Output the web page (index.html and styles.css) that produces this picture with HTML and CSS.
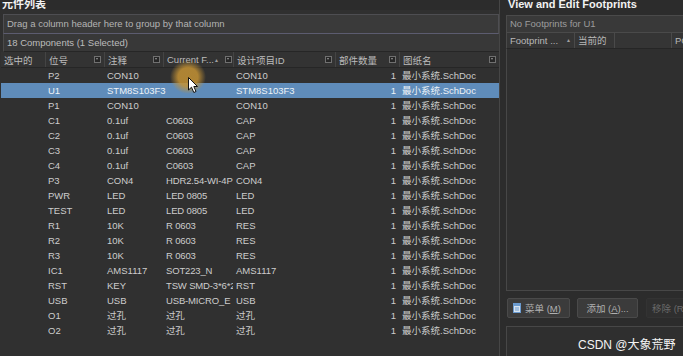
FILE: index.html
```html
<!DOCTYPE html>
<html>
<head>
    <meta charset="utf-8">
    <title>元件列表</title>
    <link rel="stylesheet" href="styles.css">
</head>
<body>

<div class="app">

    <!-- component list -->
    <section class="left">
        <div class="panel-title"><span>元件列表</span></div>
        <div class="group-box">Drag a column header here to group by that column</div>
        <div class="count-row">18 Components (1 Selected)</div>

        <table class="grid">
            <colgroup>
                <col style="width:44px">
                <col style="width:59px">
                <col style="width:59px">
                <col style="width:70px">
                <col style="width:102px">
                <col style="width:64px">
                <col style="width:100px">
            </colgroup>
            <thead>
                <tr>
                    <th><div class="hd"><span>选中的</span></div></th>
                    <th><div class="hd"><span>位号</span><i class="filter"></i></div></th>
                    <th><div class="hd"><span>注释</span><i class="filter"></i></div></th>
                    <th><div class="hd"><span>Current F...</span><b class="sort">&#9650;</b><i class="filter"></i></div></th>
                    <th><div class="hd"><span>设计项目ID</span><i class="filter"></i></div></th>
                    <th><div class="hd"><span>部件数量</span><i class="filter"></i></div></th>
                    <th><div class="hd"><span>图纸名</span><i class="filter"></i></div></th>
                </tr>
            </thead>
            <tbody>
                <tr><td></td><td>P2</td><td>CON10</td><td></td><td>CON10</td><td class="num">1</td><td>最小系统.SchDoc</td></tr>
                <tr class="selected"><td></td><td>U1</td><td>STM8S103F3</td><td></td><td>STM8S103F3</td><td class="num">1</td><td>最小系统.SchDoc</td></tr>
                <tr><td></td><td>P1</td><td>CON10</td><td></td><td>CON10</td><td class="num">1</td><td>最小系统.SchDoc</td></tr>
                <tr><td></td><td>C1</td><td>0.1uf</td><td>C0603</td><td>CAP</td><td class="num">1</td><td>最小系统.SchDoc</td></tr>
                <tr><td></td><td>C2</td><td>0.1uf</td><td>C0603</td><td>CAP</td><td class="num">1</td><td>最小系统.SchDoc</td></tr>
                <tr><td></td><td>C3</td><td>0.1uf</td><td>C0603</td><td>CAP</td><td class="num">1</td><td>最小系统.SchDoc</td></tr>
                <tr><td></td><td>C4</td><td>0.1uf</td><td>C0603</td><td>CAP</td><td class="num">1</td><td>最小系统.SchDoc</td></tr>
                <tr><td></td><td>P3</td><td>CON4</td><td>HDR2.54-WI-4P</td><td>CON4</td><td class="num">1</td><td>最小系统.SchDoc</td></tr>
                <tr><td></td><td>PWR</td><td>LED</td><td>LED 0805</td><td>LED</td><td class="num">1</td><td>最小系统.SchDoc</td></tr>
                <tr><td></td><td>TEST</td><td>LED</td><td>LED 0805</td><td>LED</td><td class="num">1</td><td>最小系统.SchDoc</td></tr>
                <tr><td></td><td>R1</td><td>10K</td><td>R 0603</td><td>RES</td><td class="num">1</td><td>最小系统.SchDoc</td></tr>
                <tr><td></td><td>R2</td><td>10K</td><td>R 0603</td><td>RES</td><td class="num">1</td><td>最小系统.SchDoc</td></tr>
                <tr><td></td><td>R3</td><td>10K</td><td>R 0603</td><td>RES</td><td class="num">1</td><td>最小系统.SchDoc</td></tr>
                <tr><td></td><td>IC1</td><td>AMS1117</td><td>SOT223_N</td><td>AMS1117</td><td class="num">1</td><td>最小系统.SchDoc</td></tr>
                <tr><td></td><td>RST</td><td>KEY</td><td>TSW SMD-3*6*2.5</td><td>RST</td><td class="num">1</td><td>最小系统.SchDoc</td></tr>
                <tr><td></td><td>USB</td><td>USB</td><td>USB-MICRO_E</td><td>USB</td><td class="num">1</td><td>最小系统.SchDoc</td></tr>
                <tr><td></td><td>O1</td><td>过孔</td><td>过孔</td><td>过孔</td><td class="num">1</td><td>最小系统.SchDoc</td></tr>
                <tr><td></td><td>O2</td><td>过孔</td><td>过孔</td><td>过孔</td><td class="num">1</td><td>最小系统.SchDoc</td></tr>
            </tbody>
        </table>

        <!-- mouse highlight from the recording -->
        <div class="cursor-glow"></div>
        <svg class="cursor" width="11" height="17" viewBox="0 0 11 17">
            <path d="M0.5 0.5 L0.5 13 L3.5 10.2 L5.8 15.5 L8 14.5 L5.8 9.5 L9.5 9.5 Z" fill="#ffffff" stroke="#111111" stroke-width="1"/>
        </svg>
    </section>

    <!-- footprints -->
    <section class="right">
        <div class="panel-title"><span>View and Edit Footprints</span></div>
        <div class="fp-note">No Footprints for U1</div>
        <div class="fp-head">
            <div class="fp-col c1"><span>Footprint ...</span><b class="sort">&#9650;</b></div>
            <div class="fp-col c2">当前的</div>
            <div class="fp-col c3"></div>
            <div class="fp-col c4">PC</div>
        </div>
        <div class="fp-body"></div>
        <div class="fp-buttons">
            <button class="btn">
                <svg width="8" height="10" viewBox="0 0 8 10">
                    <rect x="0.5" y="0.5" width="7" height="9" fill="#d8e4f0" stroke="#6b9bd0"/>
                    <rect x="0.5" y="0.5" width="7" height="2.5" fill="#6b9bd0"/>
                    <line x1="2" y1="5" x2="6" y2="5" stroke="#6b9bd0"/>
                    <line x1="2" y1="7" x2="6" y2="7" stroke="#6b9bd0"/>
                </svg>
                <span>菜单 (<u>M</u>)</span>
            </button>
            <button class="btn"><span>添加 (<u>A</u>)...</span></button>
            <button class="btn disabled"><span>移除 (R)</span></button>
        </div>
        <div class="fp-box">
            <span class="watermark">CSDN @大象荒野</span>
        </div>
    </section>

</div>

</body>
</html>
```

FILE: styles.css
```css
body {
    margin: 0;
    background-color: #2c2c2c;
    font-family: "Liberation Sans", "Noto Sans CJK SC", sans-serif;
    font-size: 9.5px;
    color: #c9c9c9;
}

.app {
    display: flex;
    height: 356px;
    overflow: hidden;
}

/* ---------- left panel ---------- */

.left {
    position: relative;
    width: 499px;
    border-right: 1px solid #464646;
    display: flex;
    flex-direction: column;
    background-color: #303030;
}

.panel-title {
    height: 10px;
    overflow: hidden;
    display: flex;
    align-items: flex-end;
    padding-left: 2px;
    background-color: #2c2c2c;
}

.panel-title span {
    font-size: 11px;
    font-weight: bold;
    line-height: 11px;
    color: #f2f2f2;
    white-space: nowrap;
}

.group-box {
    margin: 4px 0 0 3px;
    height: 18px;
    line-height: 18px;
    padding-left: 3px;
    background-color: #3a3a3a;
    border: 1px solid #4e4e52;
    border-bottom: 1px solid #5c5c70;
    color: #b4b4b4;
}

.count-row {
    margin-left: 3px;
    height: 17px;
    line-height: 17px;
    padding-left: 3px;
    background-color: #383838;
    border-left: 1px solid #4a4a4a;
    border-bottom: 1px solid #262626;
    color: #bdbdbd;
}

.grid {
    margin-left: 1px;
    border-collapse: collapse;
    table-layout: fixed;
    width: 498px;
}

.grid th {
    height: 15px;
    padding: 0;
    font-weight: normal;
    text-align: left;
    color: #bcbcbc;
    background-color: #333333;
    border-bottom: 1px solid #262626;
}

.grid th .hd {
    display: flex;
    align-items: center;
    height: 15px;
    padding: 0 3px 0 3px;
    border-left: 1px solid #444444;
}

.grid th:first-child .hd {
    border-left: none;
}

.grid th .hd span {
    flex: 1;
    white-space: nowrap;
}

.filter {
    position: relative;
    flex: none;
    width: 5px;
    height: 5px;
    border: 1px solid #707070;
    background-color: #262626;
}

.filter::after {
    content: "";
    position: absolute;
    left: 1px;
    top: 1px;
    border-left: 1.5px solid transparent;
    border-right: 1.5px solid transparent;
    border-top: 2px solid #9a9a9a;
}

.sort {
    flex: none;
    font-size: 5px;
    color: #a0a0a0;
    margin-right: 6px;
}

.grid td {
    height: 15px;
    padding: 0 3px;
    white-space: nowrap;
    color: #cdcdcd;
    line-height: 15px;
}

.grid td:nth-child(4) {
    overflow: hidden;
    padding-right: 0;
    letter-spacing: -0.15px;
}

.grid td.num {
    text-align: right;
    padding-right: 3px;
}

.grid tr.selected td {
    background-color: #5f8cba;
    color: #eef3f8;
}

.cursor-glow {
    position: absolute;
    left: 170px;
    top: 60px;
    width: 36px;
    height: 34px;
    border-radius: 50%;
    background: radial-gradient(closest-side, rgba(196, 146, 52, 0.85) 55%, rgba(196, 146, 52, 0) 100%);
}

.cursor {
    position: absolute;
    left: 188px;
    top: 77px;
}

/* ---------- right panel ---------- */

.right {
    flex: 1;
    margin-left: 6px;
    display: flex;
    flex-direction: column;
}

.fp-note {
    margin-top: 5px;
    height: 16px;
    line-height: 16px;
    padding-left: 3px;
    background-color: #393939;
    border: 1px solid #4a4a4a;
    border-right: none;
    color: #9c9c9c;
}

.fp-head {
    display: flex;
    height: 15px;
    line-height: 15px;
    background-color: #353535;
    border-left: 1px solid #4a4a4a;
    border-bottom: 1px solid #262626;
    color: #b8b8b8;
}

.fp-col {
    padding-left: 3px;
    border-right: 1px solid #4a4a4a;
    white-space: nowrap;
    overflow: hidden;
}

.fp-col.c1 {
    width: 64px;
    display: flex;
    align-items: center;
}

.fp-col.c1 span {
    flex: 1;
}

.fp-col.c1 .sort {
    margin-right: 3px;
}

.fp-col.c2 {
    width: 36px;
}

.fp-col.c3 {
    width: 53px;
}

.fp-col.c4 {
    flex: 1;
    border-right: none;
}

.fp-body {
    height: 241px;
    background-color: #2f2f2f;
    border-left: 1px solid #474747;
    border-bottom: 1px solid #474747;
}

.fp-buttons {
    display: flex;
    gap: 7px;
    padding: 7px 0 8px 1px;
}

.btn {
    flex: none;
    height: 20px;
    padding: 0 5px;
    display: flex;
    align-items: center;
    gap: 4px;
    white-space: nowrap;
    font-family: "Liberation Sans", "Noto Sans CJK SC", sans-serif;
    font-size: 9.5px;
    color: #b0b0b0;
    background-color: #3b3b3b;
    border: 1px solid #4a4a4a;
    border-radius: 2px;
}

.btn:first-child {
    width: 63px;
}

.btn:nth-child(2) {
    width: 61px;
    justify-content: center;
}

.btn.disabled {
    color: #6a6a6a;
    background-color: #2f2f2f;
    border-color: #333333;
    margin-left: 1px;
}

.fp-box {
    flex: 1;
    position: relative;
    background-color: #2f2f2f;
    border-top: 1px solid #474747;
    border-left: 1px solid #474747;
}

.watermark {
    position: absolute;
    left: 71px;
    top: 8px;
    font-size: 12px;
    color: #f4f4f4;
    white-space: nowrap;
}
```
